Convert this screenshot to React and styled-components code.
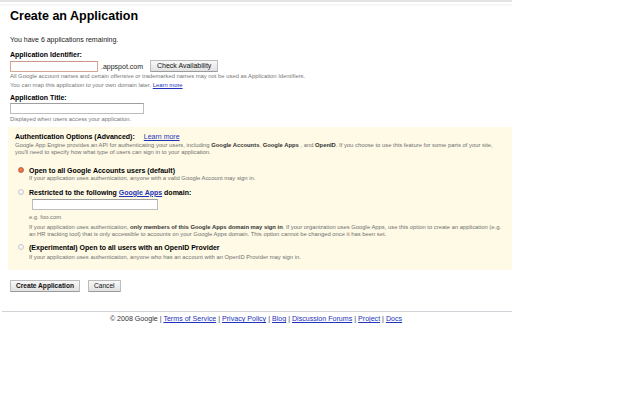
import React from "react";
import styled, { createGlobalStyle } from "styled-components";

const Global = createGlobalStyle`
  html, body { margin: 0; padding: 0; background: #fff; }
  body { font-family: "Liberation Sans", Arial, sans-serif; color: #000; }
`;

const Page = styled.div`
  width: 512px;
`;

const TopRule = styled.div`
  height: 2px;
  background: #e4e4e4;
  box-shadow: 0 4px 0 #f6f6f6;
`;

const Content = styled.div`
  padding: 0 10px;
`;

const Title = styled.h1`
  margin: 7px 0 0;
  font-size: 12.5px;
  line-height: 15px;
  font-weight: bold;
  color: #000;
`;

const Para = styled.div`
  margin-top: ${(p) => p.$mt || 0}px;
  font-size: 7px;
  line-height: 9px;
  color: #222;
`;

const Label = styled.div`
  margin-top: ${(p) => p.$mt || 0}px;
  font-size: 7px;
  line-height: 9px;
  font-weight: bold;
  color: #000;
`;

const FieldRow = styled.div`
  display: flex;
  align-items: center;
  height: 12px;
  margin-top: 1px;
`;

const TextInput = styled.div`
  box-sizing: border-box;
  width: ${(p) => p.$w}px;
  height: 11px;
  margin-top: ${(p) => p.$mt || 0}px;
  margin-left: ${(p) => p.$ml || 0}px;
  background: #fff;
  border: 1px solid ${(p) => (p.$error ? "#d6a596" : "#bdbdbd")};
  border-top-color: ${(p) => (p.$error ? "#c99888" : "#9e9e9e")};
`;

const Suffix = styled.span`
  margin: 0 7px 0 3px;
  font-size: 7px;
  color: #222;
`;

const Button = styled.button`
  box-sizing: border-box;
  height: 12px;
  padding: 0 ${(p) => p.$px || 6}px;
  font-family: "Liberation Sans", Arial, sans-serif;
  font-size: ${(p) => p.$fs || 7}px;
  font-weight: ${(p) => (p.$bold ? "bold" : "normal")};
  line-height: 10px;
  color: #111;
  background: linear-gradient(#f8f8f8, #e2e2e2);
  border: 1px solid #bcbcbc;
  border-bottom-color: #9a9a9a;
  border-radius: 1px;
  cursor: pointer;
`;

const Help = styled.div`
  margin-top: ${(p) => p.$mt || 0}px;
  font-size: 5.85px;
  line-height: ${(p) => p.$lh || 9}px;
  color: #777;
  white-space: nowrap;
`;

const Link = styled.a`
  color: #2233bb;
  text-decoration: underline;
  font-weight: ${(p) => (p.$bold ? "bold" : "inherit")};
`;

const OptionsBox = styled.div`
  margin: 4px 0 0 8px;
  padding: 4.5px 7px 9.5px;
  background: #fefae6;
`;

const BoxHeading = styled.div`
  display: flex;
  gap: 9px;
  font-size: 7px;
  line-height: 9px;
`;

const Desc = styled.div`
  margin-top: ${(p) => p.$mt || 0}px;
  padding-left: ${(p) => p.$indent || 0}px;
  font-size: 5.85px;
  line-height: 7px;
  color: #707070;
  white-space: nowrap;
  b { color: #333; }
`;

const OptionRow = styled.div`
  display: flex;
  align-items: center;
  margin-top: ${(p) => p.$mt || 0}px;
  padding-left: 3px;
  font-size: 7px;
  line-height: 9px;
  font-weight: bold;
  color: #000;
`;

const Radio = styled.span`
  box-sizing: border-box;
  width: 6px;
  height: 6px;
  margin-right: 5px;
  border-radius: 50%;
  flex: none;
  background: ${(p) =>
    p.$checked
      ? "radial-gradient(circle at 45% 40%, #f08a63, #d9582f)"
      : "radial-gradient(circle at 45% 40%, #ffffff, #e8e8e8)"};
  border: 1px solid ${(p) => (p.$checked ? "#c9603e" : "#c8c8c8")};
`;

const Actions = styled.div`
  display: flex;
  gap: 8px;
  margin: 10px 0 0 10px;
`;

const FooterRule = styled.div`
  height: 1px;
  margin: 19px 0 0 2px;
  background: #cfd3d8;
`;

const Footer = styled.div`
  margin-top: 3px;
  text-align: center;
  font-size: 7.1px;
  line-height: 9px;
  color: #333;
`;

export default function App() {
  const footerLinks = ["Terms of Service", "Privacy Policy", "Blog", "Discussion Forums", "Project", "Docs"];
  return (
    <Page>
      <Global />
      <TopRule />
      <Content>
        <Title>Create an Application</Title>
        <Para $mt={11}>You have 6 applications remaining.</Para>
        <Label $mt={6}>Application Identifier:</Label>
        <FieldRow>
          <TextInput $w={88} $error />
          <Suffix>.appspot.com</Suffix>
          <Button>Check Availability</Button>
        </FieldRow>
        <Help>
          All Google account names and certain offensive or trademarked names may not be used as Application Identifiers.
        </Help>
        <Help>
          You can map this application to your own domain later. <Link href="#">Learn more</Link>
        </Help>
        <Label $mt={2.5}>Application Title:</Label>
        <TextInput $w={134} $mt={1} />
        <Help $mt={1.5} $lh={8}>Displayed when users access your application.</Help>
      </Content>

      <OptionsBox>
        <BoxHeading>
          <b>Authentication Options (Advanced):</b>
          <Link href="#">Learn more</Link>
        </BoxHeading>
        <Desc $mt={1}>
          Google App Engine provides an API for authenticating your users, including <b>Google Accounts</b>, <b>Google Apps</b> , and <b>OpenID</b>. If you choose to use this feature for some parts of your site,
          <br />
          you'll need to specify how what type of users can sign in to your application.
        </Desc>

        <OptionRow $mt={10}>
          <Radio $checked />
          Open to all Google Accounts users (default)
        </OptionRow>
        <Desc $indent={14}>
          If your application uses authentication, anyone with a valid Google Account may sign in.
        </Desc>

        <OptionRow $mt={6}>
          <Radio />
          Restricted to the following&nbsp;<Link href="#" $bold>Google Apps</Link>&nbsp;domain:
        </OptionRow>
        <TextInput $w={126} $mt={2.5} $ml={17} />
        <Desc $indent={14} $mt={3.5}>e.g. foo.com</Desc>
        <Desc $indent={14} $mt={3}>
          If your application uses authentication, <b>only members of this Google Apps domain may sign in</b>. If your organization uses Google Apps, use this option to create an application (e.g.
          <br />
          an HR tracking tool) that is only accessible to accounts on your Google Apps domain. This option cannot be changed once it has been set.
        </Desc>

        <OptionRow $mt={5}>
          <Radio />
          (Experimental) Open to all users with an OpenID Provider
        </OptionRow>
        <Desc $indent={14} $mt={2}>
          If your application uses authentication, anyone who has an account with an OpenID Provider may sign in.
        </Desc>
      </OptionsBox>

      <Actions>
        <Button $bold $fs={6.6} $px={5}>Create Application</Button>
        <Button $fs={6.6} $px={5}>Cancel</Button>
      </Actions>

      <FooterRule />
      <Footer>
        © 2008 Google
        {footerLinks.map((l) => (
          <React.Fragment key={l}>
            {" | "}
            <Link href="#">{l}</Link>
          </React.Fragment>
        ))}
      </Footer>
    </Page>
  );
}
